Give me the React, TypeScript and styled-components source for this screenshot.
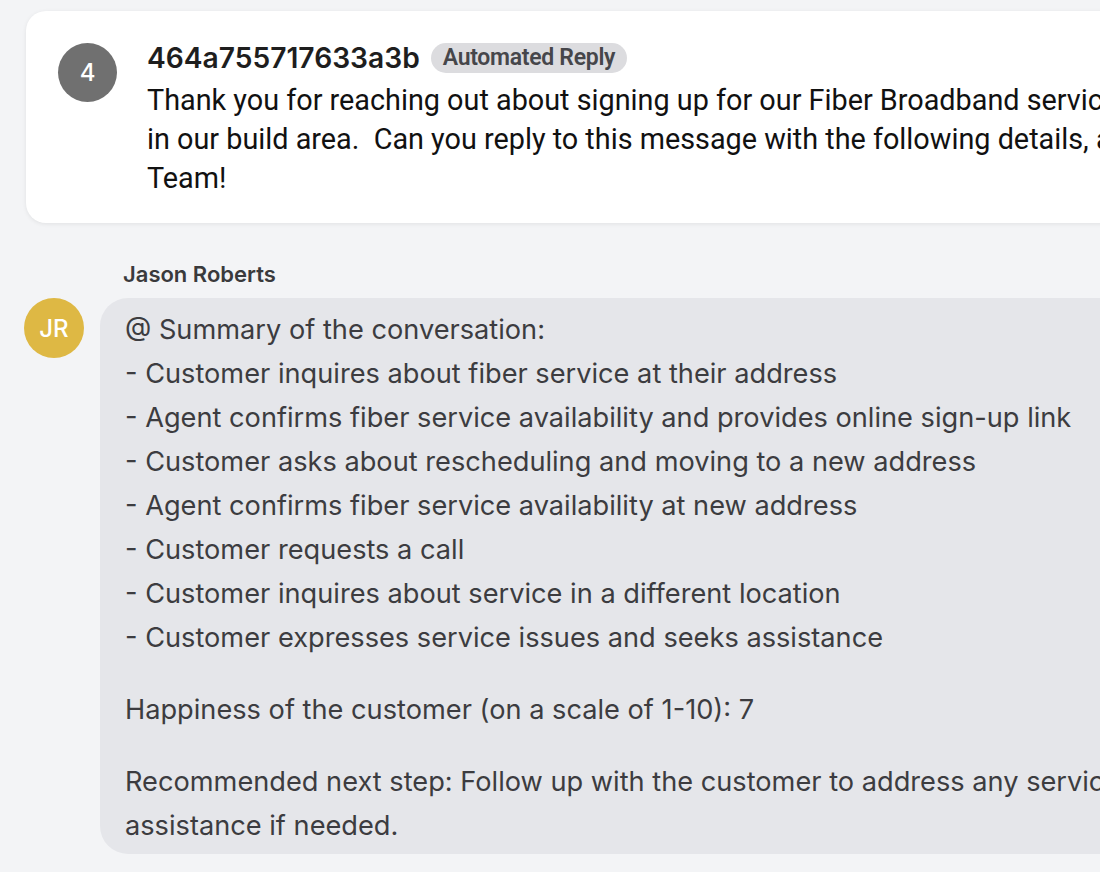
import { FC } from "react";
import styled, { createGlobalStyle } from "styled-components";

const GlobalStyle = createGlobalStyle`
  html, body {
    margin: 0;
    padding: 0;
    background: #f3f4f6;
    overflow: hidden;
  }
  #root {
    width: 1100px;
    height: 872px;
    overflow: hidden;
  }
`;

const autoReplyLines = [
  "Thank you for reaching out about signing up for our Fiber Broadband service! We'd be happy to check if your address is",
  "in our build area.  Can you reply to this message with the following details, and we will get back to you shortly. - The Fiber",
  "Team!",
];

const summaryPoints = [
  "Customer inquires about fiber service at their address",
  "Agent confirms fiber service availability and provides online sign-up link",
  "Customer asks about rescheduling and moving to a new address",
  "Agent confirms fiber service availability at new address",
  "Customer requests a call",
  "Customer inquires about service in a different location",
  "Customer expresses service issues and seeks assistance",
];

const Avatar: FC<{ label: string; color: string; size: number }> = ({ label, color, size }) => (
  <AvatarCircle $color={color} $size={size}>
    {label}
  </AvatarCircle>
);

export default function App() {
  return (
    <>
      <GlobalStyle />
      <Thread>
        <AutoCard>
          <Avatar label="4" color="#707070" size={59} />
          <CardBody>
            <CardHeader>
              <SenderId>464a755717633a3b</SenderId>
              <Badge>Automated Reply</Badge>
            </CardHeader>
            {autoReplyLines.map((line) => (
              <CardLine key={line}>{line}</CardLine>
            ))}
          </CardBody>
        </AutoCard>

        <NoteBlock>
          <AuthorName>Jason Roberts</AuthorName>
          <NoteRow>
            <Avatar label="JR" color="#deb844" size={60} />
            <Bubble>
              <Paragraph>
                <BubbleLine>@ Summary of the conversation:</BubbleLine>
                {summaryPoints.map((p) => (
                  <BubbleLine key={p}>- {p}</BubbleLine>
                ))}
              </Paragraph>
              <Paragraph>
                <BubbleLine>Happiness of the customer (on a scale of 1-10): 7</BubbleLine>
              </Paragraph>
              <Paragraph>
                <BubbleLine>
                  Recommended next step: Follow up with the customer to address any service issues and provide
                </BubbleLine>
                <BubbleLine>assistance if needed.</BubbleLine>
              </Paragraph>
            </Bubble>
          </NoteRow>
        </NoteBlock>
      </Thread>
    </>
  );
}

const Thread = styled.div`
  width: 1700px;
  display: flex;
  flex-direction: column;
  padding-top: 11px;
  font-family: Inter, "Noto Sans", sans-serif;
`;

const AutoCard = styled.div`
  margin-left: 26px;
  background: #ffffff;
  border-radius: 20px;
  box-shadow: 0 1px 4px rgba(0, 0, 0, 0.08);
  display: flex;
  align-items: flex-start;
  gap: 30px;
  padding: 32px 32px 25px 32px;
`;

const AvatarCircle = styled.div<{ $color: string; $size: number }>`
  flex: none;
  width: ${(p) => p.$size}px;
  height: ${(p) => p.$size}px;
  border-radius: 50%;
  background: ${(p) => p.$color};
  color: #ffffff;
  display: flex;
  align-items: center;
  justify-content: center;
  font-family: Inter, sans-serif;
  font-size: 24px;
  font-weight: 500;
`;

const CardBody = styled.div`
  display: flex;
  flex-direction: column;
`;

const CardHeader = styled.div`
  display: flex;
  align-items: center;
  gap: 11px;
  height: 30px;
  margin-bottom: 8px;
`;

const SenderId = styled.span`
  font-family: Inter, sans-serif;
  font-size: 28.2px;
  font-weight: 600;
  color: #1e1e1e;
`;

const Badge = styled.span`
  background: #dcdcdf;
  color: #46464a;
  border-radius: 15px;
  padding: 4px 12px;
  font-family: Roboto, sans-serif;
  font-size: 23px;
  font-weight: 600;
  letter-spacing: -0.3px;
  line-height: 22px;
`;

const CardLine = styled.div`
  font-family: Roboto, "Liberation Sans", sans-serif;
  font-size: 28.8px;
  line-height: 39px;
  color: #111111;
  white-space: pre;
`;

const NoteBlock = styled.div`
  display: flex;
  flex-direction: column;
  margin-top: 39px;
`;

const AuthorName = styled.div`
  margin-left: 123px;
  font-size: 22px;
  font-weight: 600;
  color: #3a3a3c;
  line-height: 24px;
  margin-bottom: 12px;
`;

const NoteRow = styled.div`
  display: flex;
  align-items: flex-start;
  gap: 16px;
  padding-left: 24px;
`;

const Bubble = styled.div`
  background: #e5e6ea;
  border-radius: 28px;
  padding: 10px 25px 6px 25px;
  display: flex;
  flex-direction: column;
  gap: 28px;
  color: #3c3c40;
`;

const Paragraph = styled.div`
  display: flex;
  flex-direction: column;
`;

const BubbleLine = styled.div`
  font-size: 27.2px;
  line-height: 44px;
  white-space: pre;
`;
